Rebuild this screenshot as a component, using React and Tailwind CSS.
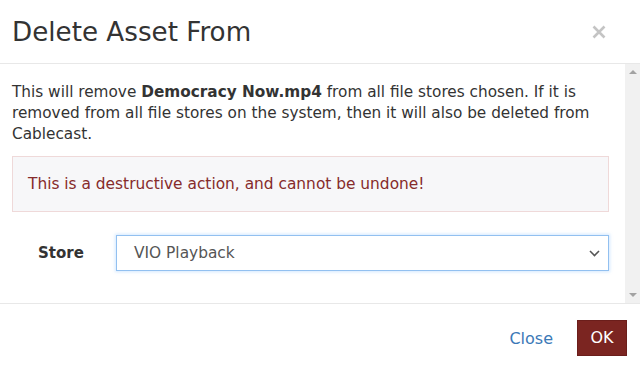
import React from "react";

export default function App() {
  return (
    <div className="w-[640px] h-[371px] bg-white flex flex-col overflow-hidden font-['DejaVu_Sans',sans-serif] text-[#333]">
      <div className="h-[64px] shrink-0 border-b border-[#e8e8e8] flex items-center justify-between pl-[12px] pr-[34px]">
        <div className="text-[26.2px] leading-none text-[#333] pt-[2px]">Delete Asset From</div>
        <svg width="14" height="14" viewBox="0 0 14 14" className="mt-[1px]">
          <path d="M1.5 1.5 L12.5 12.5 M12.5 1.5 L1.5 12.5" stroke="#c4c4c4" strokeWidth="2.6" strokeLinecap="butt" />
        </svg>
      </div>
      <div className="h-[239px] shrink-0 flex">
        <div className="flex-1 pl-[12px] pr-[16px] pt-[18px]">
          <p className="text-[15.3px] leading-[21px]">
            This will remove <b>Democracy Now.mp4</b> from all file stores chosen. If it is removed from all file stores on the system, then it will also be deleted from Cablecast.
          </p>
          <div className="mt-[11px] h-[56px] bg-[#f7f7f9] border border-[#efd9d9] flex items-center pl-[15px] pt-[2px] text-[15.4px] text-[#862b2b]">
            This is a destructive action, and cannot be undone!
          </div>
          <div className="mt-[23px] flex items-center">
            <div className="w-[104px] pl-[26px] text-[15px] font-bold pt-[1px]">Store</div>
            <div className="flex-1 h-[36px] border border-[#92c0f0] shadow-[0_0_3px_1px_rgba(128,189,255,0.35)] flex items-center justify-between pl-[17px] pr-[8px] text-[15.4px] text-[#555]">
              <span className="pt-[1px]">VIO Playback</span>
              <svg width="11" height="7" viewBox="0 0 11 7">
                <path d="M1 1 L5.5 5.5 L10 1" stroke="#555" strokeWidth="1.6" fill="none" />
              </svg>
            </div>
          </div>
        </div>
        <div className="w-[15px] bg-[#f1f1f1] flex flex-col items-center justify-between py-[6px]">
          <div className="w-0 h-0 border-l-[4px] border-r-[4px] border-b-[4px] border-l-transparent border-r-transparent border-b-[#a3a3a3]" />
          <div className="w-0 h-0 border-l-[4px] border-r-[4px] border-t-[4px] border-l-transparent border-r-transparent border-t-[#a3a3a3]" />
        </div>
      </div>
      <div className="flex-1 border-t border-[#e8e8e8] flex items-center justify-end pr-[13px] pt-[1px]">
        <span className="text-[16px] text-[#3b79b7] mr-[24px] pt-[2px]">Close</span>
        <div className="w-[50px] h-[36px] bg-[#7b2521] border border-[#6b1e1b] flex items-center justify-center text-white text-[16px]">OK</div>
      </div>
    </div>
  );
}
